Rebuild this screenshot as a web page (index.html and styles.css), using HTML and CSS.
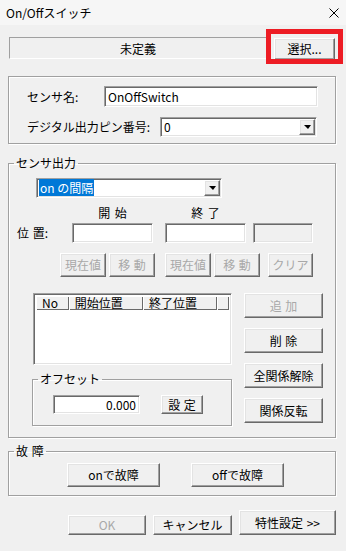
FILE: index.html
```html
<!DOCTYPE html>
<html lang="ja">
<head>
<meta charset="UTF-8" />
<meta name="viewport" content="width=device-width, initial-scale=1.0"/>
<title>On/Offスイッチ</title>
<link rel="stylesheet" href="styles.css">
</head>
<body>
<div class="window">
<header class="titlebar">
<span class="title">On/Offスイッチ</span>
<svg class="close" width="10" height="10" viewBox="0 0 10 10"><path d="M0.5 0.5 L9.5 9.5 M9.5 0.5 L0.5 9.5" stroke="#000" stroke-width="1" fill="none"/></svg>
</header>

<div class="client">
<!-- sensor type -->
<div class="type-row">
<div class="static">未定義</div>
<button class="btn select-btn">選択...</button>
<div class="mark"></div>
</div>

<div class="group basic">
<div class="field-row">
<label class="name-label">センサ名:</label>
<div class="edit name-edit">OnOffSwitch</div>
</div>
<div class="field-row pin-row">
<label class="pin-label">デジタル出力ピン番号:</label>
<div class="combo pin-combo"><span class="combo-text">0</span><span class="drop"></span></div>
</div>
</div>

<!-- sensor output -->
<fieldset class="group output">
<legend>センサ出力</legend>
<div class="combo mode-combo"><span class="combo-text"><span class="sel">on の間隔</span></span><span class="drop"></span></div>
<div class="pos-head"><span class="col">開 始</span><span class="col end">終 了</span></div>
<div class="pos-row">
<label class="pos-label">位 置:</label>
<div class="edit pos-edit"></div>
<div class="edit pos-edit end"></div>
<div class="edit pos-edit extra"></div>
</div>
<div class="pos-buttons">
<button class="btn pos-btn" disabled>現在値</button>
<button class="btn pos-btn near" disabled>移 動</button>
<button class="btn pos-btn far" disabled>現在値</button>
<button class="btn pos-btn near" disabled>移 動</button>
<button class="btn pos-btn clear" disabled>クリア</button>
</div>

<div class="list-area">
<div class="list-col">
<div class="listview">
<div class="list-head">
<span class="h-cell h-no">No</span>
<span class="h-cell h-pos">開始位置</span>
<span class="h-cell h-pos">終了位置</span>
<span class="h-cell h-rest"></span>
</div>
</div>
<fieldset class="group offset">
<legend>オフセット</legend>
<div class="offset-row">
<div class="edit offset-edit">0.000</div>
<button class="btn set-btn">設 定</button>
</div>
</fieldset>
</div>
<div class="side-buttons">
<button class="btn side" disabled>追 加</button>
<button class="btn side">削 除</button>
<button class="btn side">全関係解除</button>
<button class="btn side">関係反転</button>
</div>
</div>
</fieldset>

<!-- fault -->
<fieldset class="group fault">
<legend>故 障</legend>
<div class="fault-row">
<button class="btn fault-btn">onで故障</button>
<button class="btn fault-btn">offで故障</button>
</div>
</fieldset>

<div class="footer">
<button class="btn ok" disabled>OK</button>
<button class="btn cancel">キャンセル</button>
<button class="btn props">特性設定 &gt;&gt;</button>
</div>
</div>
</div>
</body>
</html>
```

FILE: styles.css
```css
* {
box-sizing: border-box;
}

body {
margin: 0;
font-family: "Noto Sans CJK JP", "Liberation Sans", sans-serif;
font-size: 12px;
color: #000;
background: #f0f0f0;
}

.window {
width: 346px;
height: 551px;
background: #f0f0f0;
overflow: hidden;
}

.titlebar {
height: 25px;
display: flex;
align-items: center;
justify-content: space-between;
padding: 0 7px 0 6px;
background: #f6f6f6;
}

.title {
line-height: 14px;
}

.client {
padding: 0 10px 0 8px;
}

/* 3D frames */
.btn {
font: inherit;
color: #000;
padding: 0;
margin: 0;
background: #f0f0f0;
border: 1px solid;
border-color: #fff #696969 #696969 #fff;
box-shadow: inset -1px -1px 0 #a0a0a0, inset 1px 1px 0 #e3e3e3;
line-height: 1;
display: flex;
align-items: center;
justify-content: center;
white-space: nowrap;
word-spacing: 1px;
}

.btn:disabled {
color: #a8a8a8;
}

.edit, .combo, .listview {
background: #fff;
border: 1px solid;
border-color: #a0a0a0 #fff #fff #a0a0a0;
box-shadow: inset 1px 1px 0 #696969, inset -1px -1px 0 #e3e3e3;
}

.edit {
height: 20px;
line-height: 17px;
padding: 1px 3px 0;
}

.group {
border: 1px solid #a0a0a0;
box-shadow: inset 1px 1px 0 #fff, 1px 1px 0 #fff;
}

fieldset.group {
margin: 0;
padding: 0;
min-width: 0;
}

fieldset.group legend {
margin-left: 5px;
padding: 0 2px;
line-height: 14px;
word-spacing: 1px;
}

/* top row */
.type-row {
position: relative;
display: flex;
align-items: flex-start;
margin-top: 12px;
}

.static {
margin-left: 1px;
width: 258px;
height: 22px;
border: 1px solid;
border-color: #a0a0a0 #fff #fff #a0a0a0;
display: flex;
align-items: center;
justify-content: center;
}

.select-btn {
margin: 1px 0 0 7px;
width: 61px;
height: 22px;
}

.mark {
position: absolute;
left: 258px;
top: -8px;
width: 77px;
height: 35px;
border: 5px solid #ed1c24;
pointer-events: none;
}

/* name / pin */
.basic {
margin-top: 16px;
height: 68px;
padding: 9px 0 0 18px;
}

.field-row {
display: flex;
align-items: center;
}

.name-label {
width: 77px;
line-height: 14px;
}

.name-edit {
width: 214px;
height: 21px;
}

.pin-row {
margin-top: 10px;
}

.pin-label {
width: 133px;
line-height: 14px;
}

.combo {
display: flex;
height: 20px;
padding: 1px;
}

.combo-text {
flex: 1;
padding-left: 2px;
line-height: 16px;
}

.drop {
width: 16px;
height: 16px;
background: #f0f0f0;
border: 1px solid;
border-color: #fff #696969 #696969 #fff;
box-shadow: inset -1px -1px 0 #a0a0a0, inset 1px 1px 0 #e3e3e3;
display: flex;
align-items: center;
justify-content: center;
}

.drop::after {
content: "";
border-top: 4px solid #000;
border-left: 4px solid transparent;
border-right: 3px solid transparent;
}

.pin-combo {
width: 157px;
}

/* sensor output */
fieldset.output {
margin-top: 12px;
padding-bottom: 11px;
}

.mode-combo {
margin: 8px 0 0 27px;
width: 186px;
}

.mode-combo .combo-text {
padding-left: 1px;
}

.sel {
background: #0078d7;
color: #fff;
padding: 0 1px;
}

.pos-head {
display: flex;
margin-top: 8px;
padding-left: 63px;
line-height: 14px;
word-spacing: 2px;
}

.pos-head .col {
width: 81px;
text-align: center;
}

.pos-head .col.end {
margin-left: 12px;
}

.pos-row {
display: flex;
align-items: center;
margin-top: 3px;
padding-left: 8px;
}

.pos-label {
width: 55px;
line-height: 14px;
word-spacing: 1px;
}

.pos-edit {
width: 81px;
}

.pos-edit.end {
margin-left: 12px;
}

.pos-edit.extra {
margin-left: 7px;
width: 60px;
background: #f0f0f0;
}

.pos-buttons {
display: flex;
margin-top: 10px;
padding-left: 51px;
}

.pos-btn {
width: 46px;
height: 24px;
}

.pos-btn.near {
margin-left: 3px;
}

.pos-btn.far {
margin-left: 10px;
}

.pos-btn.clear {
margin-left: 8px;
width: 45px;
}

/* list + side buttons */
.list-area {
display: flex;
margin-top: 16px;
padding-left: 23px;
}

.list-col {
width: 200px;
}

.listview {
margin-left: 1px;
width: 199px;
height: 72px;
padding: 2px;
}

.list-head {
display: flex;
height: 14px;
}

.h-cell {
background: #f0f0f0;
box-shadow: inset 1px 1px 0 #fff, inset -1px -1px 0 #696969;
line-height: 14px;
padding-left: 6px;
}

.h-no {
width: 33px;
}

.h-pos {
width: 75px;
}

.h-rest {
width: 12px;
}

fieldset.offset {
margin-top: 7px;
padding-bottom: 11px;
}

.offset-row {
display: flex;
margin-top: 9px;
padding-left: 20px;
}

.offset-edit {
width: 87px;
height: 19px;
text-align: right;
line-height: 16px;
}

.set-btn {
margin-left: 21px;
width: 42px;
height: 19px;
}

.side-buttons {
margin-left: 12px;
display: flex;
flex-direction: column;
gap: 10px;
}

.side {
width: 79px;
height: 25px;
}

/* fault */
fieldset.fault {
margin-top: 6px;
padding-bottom: 8px;
}

.fault-row {
display: flex;
gap: 31px;
margin-top: 5px;
padding-left: 58px;
}

.fault-btn {
width: 93px;
height: 24px;
}

/* footer */
.footer {
display: flex;
justify-content: flex-end;
align-items: flex-end;
gap: 7px;
margin-top: 14px;
}

.ok {
width: 78px;
height: 20px;
}

.cancel {
width: 79px;
height: 20px;
}

.props {
width: 97px;
height: 25px;
}
```
